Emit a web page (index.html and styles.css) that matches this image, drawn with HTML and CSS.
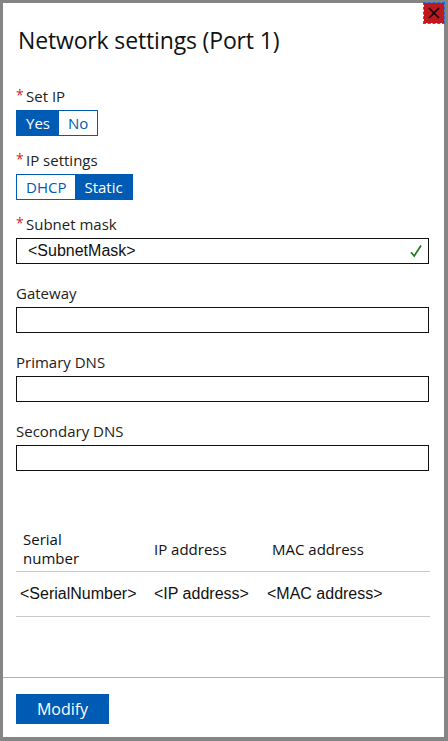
FILE: index.html
```html
<!DOCTYPE html>
<html lang="en">
<head>
<meta charset="utf-8">
<title>Network settings (Port 1)</title>
<link rel="stylesheet" href="styles.css">
</head>
<body>
<div class="dialog">
  <button class="close" aria-label="Close">
    <svg width="12" height="12" viewBox="0 0 12 12"><path d="M1 1 L11 11 M11 1 L1 11" stroke="#000" stroke-width="1.6" fill="none"/></svg>
  </button>
  <div class="content">
    <h1 class="title">Network settings (Port 1)</h1>

    <div class="field field-toggle">
      <div class="label"><span class="req">*</span>Set IP</div>
      <div class="toggle">
        <span class="opt on">Yes</span><span class="opt">No</span>
      </div>
    </div>

    <div class="field field-toggle">
      <div class="label"><span class="req">*</span>IP settings</div>
      <div class="toggle">
        <span class="opt">DHCP</span><span class="opt on">Static</span>
      </div>
    </div>

    <div class="field field-input">
      <div class="label"><span class="req">*</span>Subnet mask</div>
      <div class="input">
        <span class="value">&lt;SubnetMask&gt;</span>
        <svg class="check" width="12" height="14" viewBox="0 0 12 14"><path d="M1 8.2 L4.2 12 L11 1.5" stroke="#1e7d1e" stroke-width="1.7" fill="none"/></svg>
      </div>
    </div>

    <div class="field field-input">
      <div class="label">Gateway</div>
      <div class="input"></div>
    </div>

    <div class="field field-input">
      <div class="label">Primary DNS</div>
      <div class="input"></div>
    </div>

    <div class="field field-input">
      <div class="label">Secondary DNS</div>
      <div class="input"></div>
    </div>

    <div class="table">
      <div class="row head">
        <div class="cell c1"><span class="wrap">Serial number</span></div>
        <div class="cell c2">IP address</div>
        <div class="cell c3">MAC address</div>
      </div>
      <div class="row data">
        <div class="cell c1">&lt;SerialNumber&gt;</div>
        <div class="cell c2">&lt;IP address&gt;</div>
        <div class="cell c3">&lt;MAC address&gt;</div>
      </div>
    </div>
  </div>
  <div class="footer">
    <button class="primary">Modify</button>
  </div>
</div>
</body>
</html>
```
FILE: styles.css
```css
html, body {
  margin: 0;
  padding: 0;
  background: #fff;
}

body {
  font-family: "Open Sans", "Noto Sans", sans-serif;
  color: #1b1b1b;
}

.dialog {
  position: relative;
  width: 448px;
  height: 741px;
  box-sizing: border-box;
  border-style: solid;
  border-color: #858585;
  border-width: 3px 4px 4px 3px;
  display: flex;
  flex-direction: column;
  background: #fff;
}

.close {
  position: absolute;
  top: 0;
  right: 0;
  width: 20px;
  height: 20px;
  padding: 0;
  border: 0;
  background: #c1171f;
  outline: 1px dashed #1f6fd6;
  display: flex;
  align-items: center;
  justify-content: center;
}

.content {
  flex: 1;
  padding: 22px 15px 0 13px;
}

.title {
  margin: 0 0 31px 2px;
  font-size: 23px;
  line-height: 30px;
  font-weight: 400;
  color: #111;
  letter-spacing: -0.15px;
}

.field {
  display: flex;
  flex-direction: column;
  gap: 4px;
}

.field-toggle {
  margin-bottom: 14px;
}

.field-input {
  margin-bottom: 19px;
}

.label {
  font-size: 15px;
  line-height: 20px;
  height: 20px;
  color: #222;
  display: flex;
  align-items: center;
}

.req {
  color: #e01b1b;
  font-size: 14px;
  width: 10px;
  align-self: flex-start;
  line-height: 18px;
}

.toggle {
  display: flex;
  align-self: flex-start;
  height: 26px;
  box-sizing: border-box;
  border: 1px solid #005bb5;
}

.opt {
  padding: 0 9px;
  font-size: 15px;
  line-height: 24px;
  color: #005bb5;
  background: #fff;
}

.opt.on {
  background: #005bb5;
  color: #fff;
}

.input {
  height: 26px;
  box-sizing: border-box;
  border: 1px solid #111;
  display: flex;
  align-items: center;
  justify-content: space-between;
  padding: 0 6px 0 11px;
}

.value {
  font-family: "Liberation Sans", Arial, sans-serif;
  font-size: 16px;
  color: #111;
}

.table {
  margin-top: 56px;
  margin-right: -1px;
}

.row {
  display: grid;
  grid-template-columns: 132px 114px 1fr;
  align-items: center;
  border-bottom: 1px solid #c8c8c8;
}

.row.head {
  height: 44px;
  font-size: 15px;
  line-height: 19px;
  color: #111;
}

.row.head .c1 { padding-left: 7px; }
.row.head .c2 { padding-left: 6px; }
.row.head .c3 { padding-left: 10px; }

.wrap {
  display: block;
  width: 60px;
}

.row.data {
  height: 44px;
  font-family: "Liberation Sans", Arial, sans-serif;
  font-size: 16px;
  color: #111;
}

.row.data .c1 { padding-left: 4px; }
.row.data .c2 { padding-left: 6px; }
.row.data .c3 { padding-left: 5px; }

.footer {
  border-top: 1px solid #b3b3b3;
  padding: 16px 13px 13px;
}

.primary {
  width: 93px;
  height: 30px;
  border: 0;
  padding: 0;
  background: #005bb5;
  color: #fff;
  font-family: "Open Sans", "Noto Sans", sans-serif;
  font-size: 16px;
}
```
